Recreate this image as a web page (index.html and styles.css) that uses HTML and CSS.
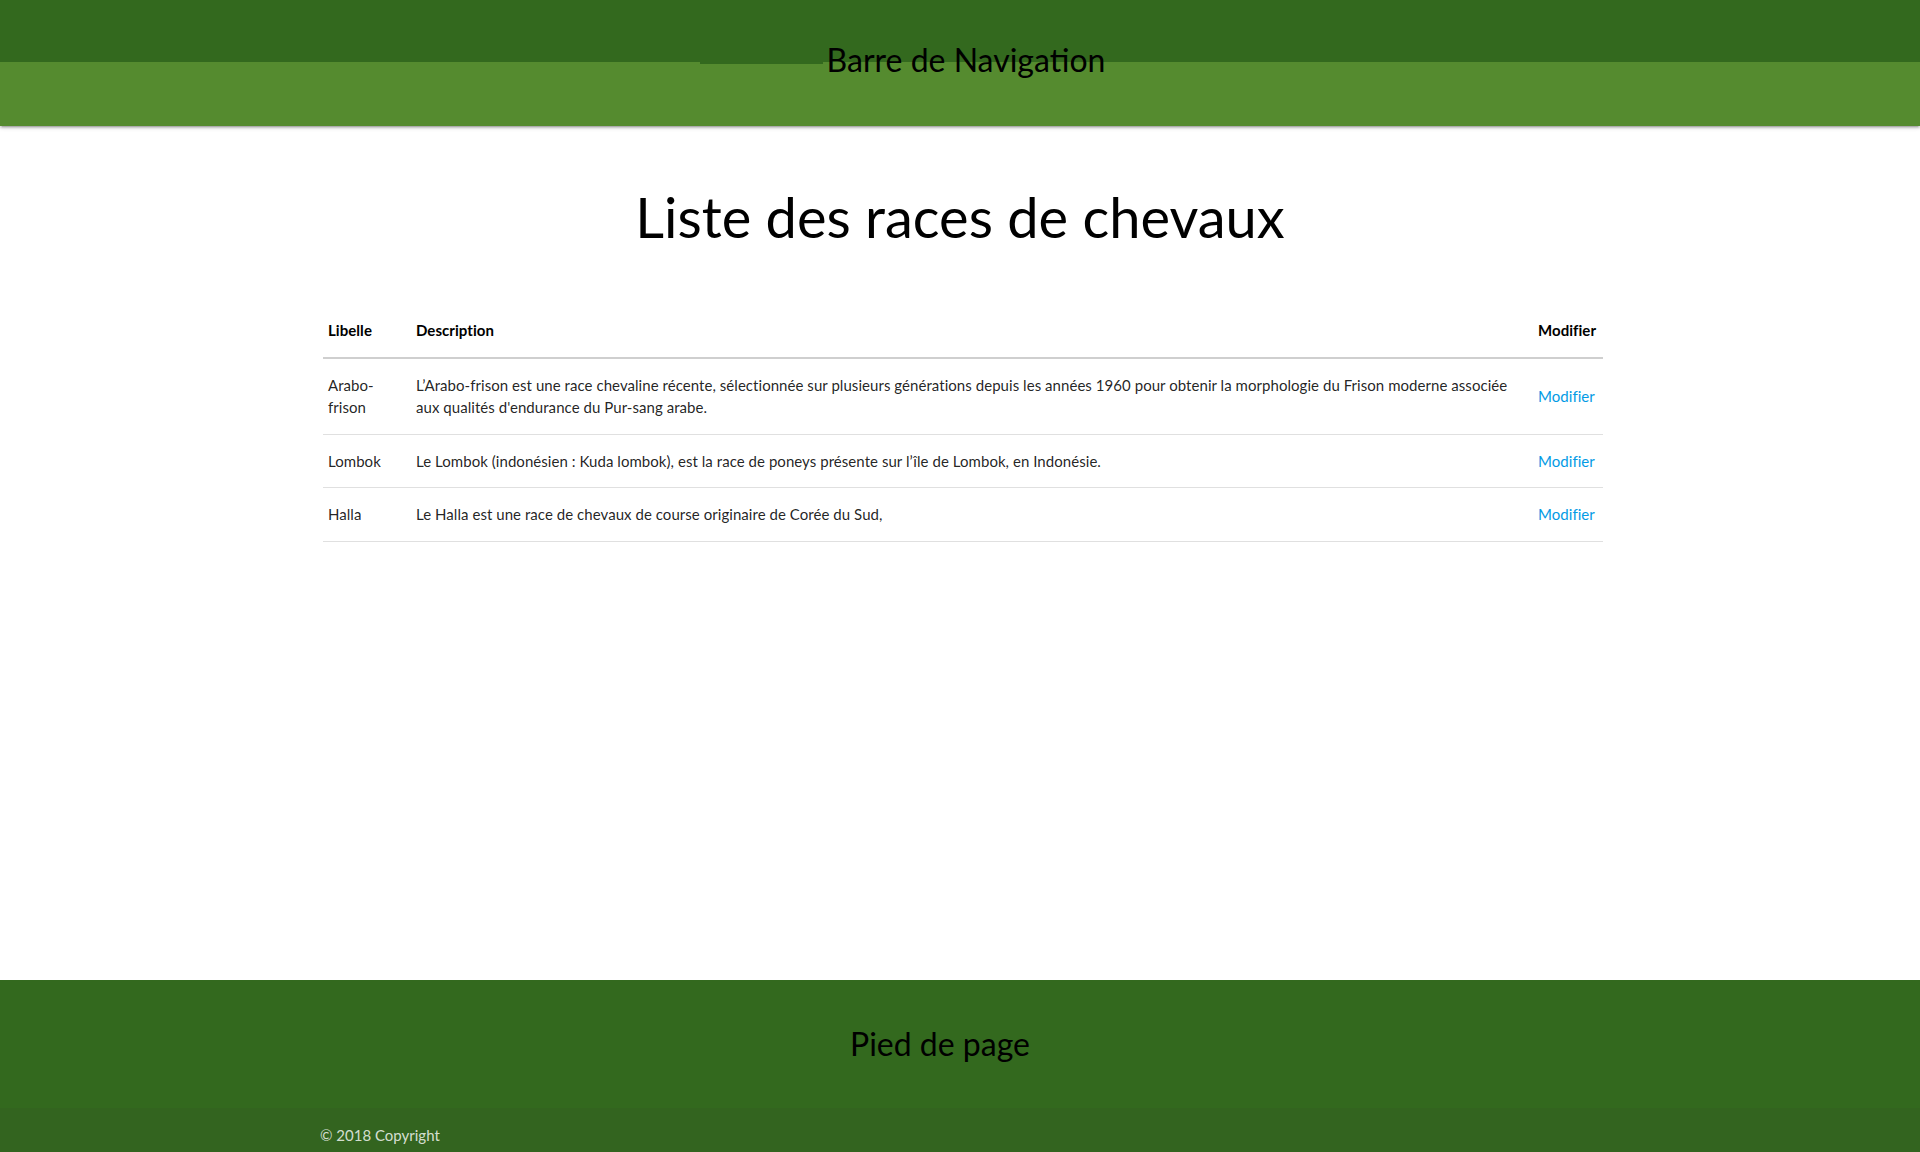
FILE: index.html
```html
<!DOCTYPE html>
<html lang="fr">
<head>
<meta charset="utf-8">
<title>Liste des races de chevaux</title>
<link rel="stylesheet" href="styles.css">
</head>
<body>
<header class="site-header">
  <div class="brand-wrap"><span class="brand">Barre de Navigation</span></div>
</header>
<main class="page-main">
  <div class="container">
    <h1 class="page-title">Liste des races de chevaux</h1>
    <table class="breeds">
      <colgroup>
        <col class="col-libelle">
        <col class="col-desc">
        <col class="col-action">
      </colgroup>
      <thead>
        <tr>
          <th>Libelle</th>
          <th>Description</th>
          <th>Modifier</th>
        </tr>
      </thead>
      <tbody>
        <tr>
          <td>Arabo-frison</td>
          <td>L’Arabo-frison est une race chevaline récente, sélectionnée sur plusieurs générations depuis les années 1960 pour obtenir la morphologie du Frison moderne associée aux qualités d'endurance du Pur-sang arabe.</td>
          <td><a class="edit-link" href="#">Modifier</a></td>
        </tr>
        <tr>
          <td>Lombok</td>
          <td>Le Lombok (indonésien : Kuda lombok), est la race de poneys présente sur l’île de Lombok, en Indonésie.</td>
          <td><a class="edit-link" href="#">Modifier</a></td>
        </tr>
        <tr>
          <td>Halla</td>
          <td>Le Halla est une race de chevaux de course originaire de Corée du Sud,</td>
          <td><a class="edit-link" href="#">Modifier</a></td>
        </tr>
      </tbody>
    </table>
  </div>
</main>
<footer class="page-footer">
  <div class="footer-title-wrap"><span class="footer-title">Pied de page</span></div>
  <div class="footer-copyright">
    <div class="container">© 2018 Copyright</div>
  </div>
</footer>
</body>
</html>
```
FILE: styles.css
```css
* { box-sizing: border-box; }

html, body {
  margin: 0;
  padding: 0;
}

body {
  font-family: "Lato", "Open Sans", "Liberation Sans", sans-serif;
  color: rgba(0, 0, 0, 0.87);
  font-size: 15px;
  line-height: 1.5;
  min-height: 100vh;
  display: flex;
  flex-direction: column;
  background: #fff;
}

.site-header {
  position: relative;
  z-index: 2;
  height: 126px;
  background: linear-gradient(to bottom, #33691e 0, #33691e 62px, #558b2f 62px, #558b2f 126px);
  box-shadow: 0 2px 2px 0 rgba(0,0,0,0.14), 0 3px 1px -2px rgba(0,0,0,0.12), 0 1px 5px 0 rgba(0,0,0,0.2);
}

.brand-wrap {
  display: flex;
  justify-content: center;
  padding-top: 40px;
  padding-left: 12px;
}

.brand {
  position: relative;
  font-size: 32px;
  line-height: 40px;
  color: #000;
}

.brand::before {
  content: "";
  position: absolute;
  right: calc(100% + 4px);
  top: 22px;
  width: 123px;
  height: 2px;
  background: #33691e;
}

.page-main {
  flex: 1;
}

.container {
  width: 1280px;
  margin: 0 auto;
}

.page-title {
  margin: 56px 0 52px;
  font-size: 56px;
  line-height: 70px;
  font-weight: 400;
  text-align: center;
  color: #000;
}

.breeds {
  width: 1280px;
  margin-left: 3px;
  table-layout: fixed;
  border-collapse: collapse;
  border-spacing: 0;
  letter-spacing: 0.05px;
}

.col-libelle { width: 88px; }
.col-action { width: 70px; }

.breeds th,
.breeds td {
  padding: 15px 5px;
  text-align: left;
  vertical-align: middle;
  line-height: 22.5px;
}

.breeds th {
  font-weight: 700;
  color: #000;
}

.breeds thead tr {
  border-bottom: 2px solid #cfcfcf;
}

.breeds tbody tr {
  border-bottom: 1px solid #e0e0e0;
}

.edit-link {
  color: #039be5;
  text-decoration: none;
}

.page-footer {
  background: #33691e;
  height: 172px;
}

.footer-title-wrap {
  display: flex;
  justify-content: center;
  padding-top: 44px;
  padding-right: 40px;
  height: 128px;
}

.footer-title {
  font-size: 32px;
  line-height: 40px;
  color: #000;
}

.footer-copyright {
  height: 44px;
  padding-top: 16px;
  background: rgba(51, 51, 51, 0.08);
  color: rgba(255, 255, 255, 0.8);
  font-size: 15px;
  line-height: 22px;
}
```
